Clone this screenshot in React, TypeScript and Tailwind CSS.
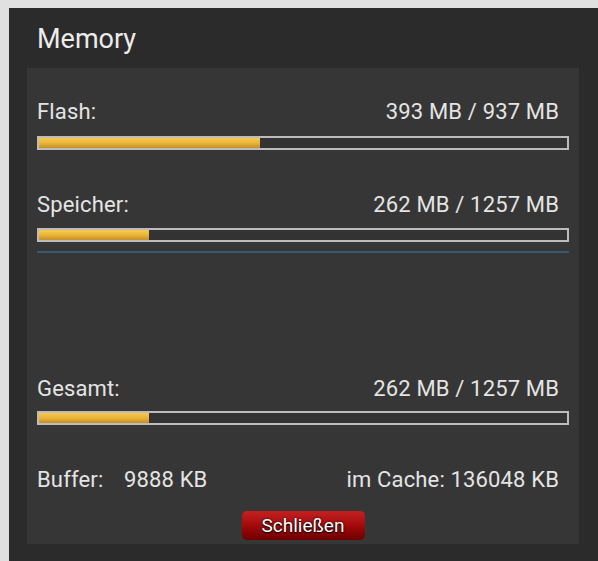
import React from "react";

function Bar({ pct }: { pct: number }) {
  return (
    <div className="h-[14px] w-full border-2 border-[#bcbcbc] bg-[#333333]">
      <div
        className="h-full bg-linear-to-b from-[#f8c94c] via-[#e9b53a] to-[#c48f27]"
        style={{ width: `${pct * 100}%` }}
      />
    </div>
  );
}

function Row({ label, value }: { label: string; value: string }) {
  return (
    <div className="flex justify-between pr-[10px] text-[22px] leading-[26px] tracking-[0.15px] text-[#e4e4e4]">
      <span>{label}</span>
      <span>{value}</span>
    </div>
  );
}

export default function App() {
  return (
    <div
      className="w-[598px] h-[561px] bg-[#e0e0e0] pt-[8px] pl-[9px] overflow-hidden"
      style={{ fontFamily: "Roboto, 'Noto Sans', sans-serif" }}
    >
      <div className="h-full bg-[#2b2b2b] flex flex-col">
        <div className="h-[60px] pl-[28px] pt-[15px] text-[27px] leading-[32px] text-[#ececec]">
          Memory
        </div>
        <div className="ml-[18px] w-[552px] h-[476px] bg-[#363636] px-[10px] pt-[31px] flex flex-col">
          <Row label="Flash:" value="393 MB / 937 MB" />
          <div className="mt-[11px]">
            <Bar pct={393 / 937} />
          </div>
          <div className="mt-[42px]">
            <Row label="Speicher:" value="262 MB / 1257 MB" />
          </div>
          <div className="mt-[10px]">
            <Bar pct={262 / 1257} />
          </div>
          <div className="mt-[9px] h-[2px] bg-[#3b566f]" />
          <div className="mt-[123px]">
            <Row label="Gesamt:" value="262 MB / 1257 MB" />
          </div>
          <div className="mt-[9px]">
            <Bar pct={262 / 1257} />
          </div>
          <div className="mt-[42px] flex justify-between pr-[10px] text-[22px] leading-[26px] tracking-[0.15px] text-[#e4e4e4]">
            <div className="flex">
              <span className="w-[87px]">Buffer:</span>
              <span>9888 KB</span>
            </div>
            <span>im Cache: 136048 KB</span>
          </div>
          <div className="mt-[18px] flex justify-center">
            <button className="w-[123px] h-[29px] rounded-[5px] bg-linear-to-b from-[#c42020] via-[#a30a0a] to-[#6e0000] text-[19px] leading-[29px] text-white [text-shadow:0_1px_1px_#000,0_0_2px_#000]">
              Schließen
            </button>
          </div>
        </div>
      </div>
    </div>
  );
}
